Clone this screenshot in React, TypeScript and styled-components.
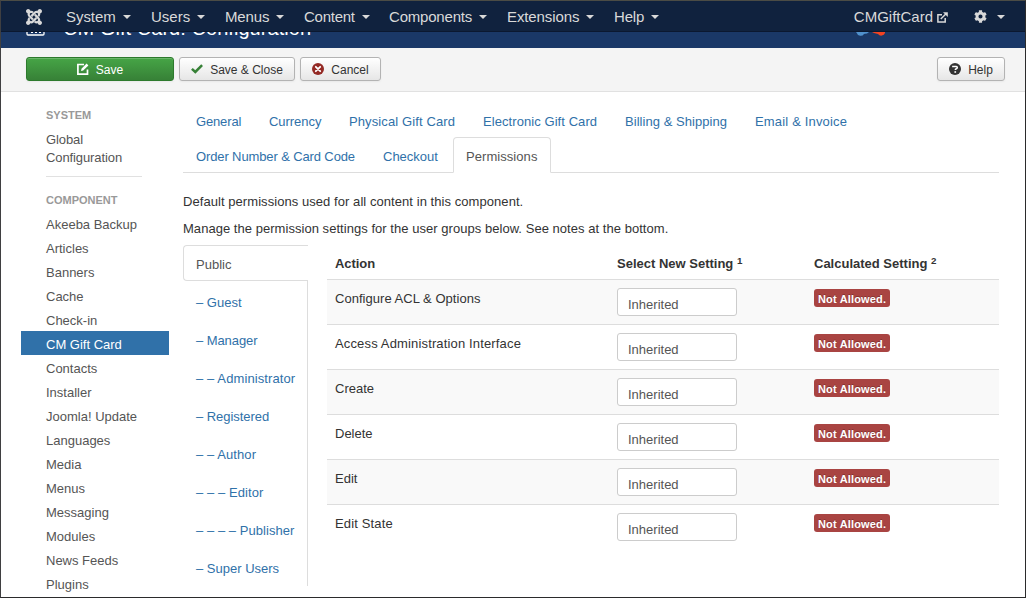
import React from "react";
import styled, { createGlobalStyle } from "styled-components";
import { ImJoomla } from "react-icons/im";
import { FaCog } from "react-icons/fa";

const GlobalStyle = createGlobalStyle`
  *, *::before, *::after { box-sizing: border-box; }
  body { margin: 0; font: 13px/18px "Liberation Sans", Arial, sans-serif; color: #333; background: #fff; }
  ul { list-style: none; margin: 0; padding: 0; }
  p { margin: 0; }
  a { color: inherit; text-decoration: none; }
`;

const Frame = styled.div`
  height: 598px;
  border: 1px solid #2b2b2c;
  border-top-color: #4b4c45;
  border-left-color: #3f3f41;
  overflow: hidden;
  display: flex;
  flex-direction: column;
  background: #fff;
`;

const Navbar = styled.nav`
  flex: none;
  display: flex;
  align-items: center;
  height: 31px;
  padding: 2px 20px 0 25px;
  background: #10223e;
  border-bottom: 1px solid #0b1830;
  color: #d9d9d9;
  font-size: 15px;
`;

const NavMenu = styled.ul`
  display: flex;
  margin-left: 24px;
  flex: 1;
`;

const NavItem = styled.li<{ $w: number; $ls?: number }>`
  display: flex;
  align-items: center;
  width: ${(p) => p.$w}px;
  line-height: 20px;
  white-space: nowrap;
  letter-spacing: ${(p) => p.$ls ?? 0}px;
`;

const Caret = styled.span`
  margin: 0 0 1px 7px;
  border: 4px solid transparent;
  border-top-color: #d9d9d9;
  border-bottom: 0;
`;

const SiteLink = styled.a`
  display: flex;
  align-items: center;
  gap: 4px;
  margin-right: 26px;
`;

const Settings = styled.div`
  display: flex;
  align-items: center;
  gap: 3px;
  svg { margin-bottom: 2px; }
`;

const Header = styled.header`
  flex: none;
  display: flex;
  align-items: flex-start;
  height: 16px;
  padding: 0 139px 0 25px;
  overflow: hidden;
  background: #1a3867;
  color: #fff;
  & > svg { flex: none; }
`;

const Title = styled.h1`
  flex: 1;
  margin: -15px 0 0 18px;
  font-size: 20px;
  line-height: 22px;
  font-weight: normal;
  letter-spacing: 0.05px;
  white-space: nowrap;
`;

const Toolbar = styled.div`
  flex: none;
  display: flex;
  gap: 5px;
  height: 44px;
  padding: 9px 20px 0 25px;
  background: #f4f4f4;
  border-bottom: 1px solid #e1e1e1;
`;

const Button = styled.button<{ $w: number; $primary?: boolean; $end?: boolean }>`
  display: flex;
  align-items: center;
  justify-content: center;
  gap: 7px;
  width: ${(p) => p.$w}px;
  height: 24px;
  margin-left: ${(p) => (p.$end ? "auto" : "0")};
  padding: 1px 0 0;
  font: 12px/18px "Liberation Sans", Arial, sans-serif;
  white-space: nowrap;
  border-radius: 3px;
  border: 1px solid ${(p) => (p.$primary ? "#2d7a2d" : "#b3b3b3")};
  color: ${(p) => (p.$primary ? "#fff" : "#333")};
  background: ${(p) =>
    p.$primary ? "linear-gradient(#46a546, #378137)" : "linear-gradient(#fff, #e6e6e6)"};
  box-shadow: inset 0 1px 0 rgba(255, 255, 255, 0.2), 0 1px 2px rgba(0, 0, 0, 0.05);
  svg { margin-bottom: 1px; }
`;

const Body = styled.div`
  display: flex;
  flex: 1;
  min-height: 0;
`;

const Sidebar = styled.aside`
  flex: none;
  width: 148px;
  margin: 14px 14px 0 20px;
`;

const SideHeading = styled.h2`
  margin: 0;
  padding-left: 25px;
  font-size: 11px;
  line-height: 18px;
  color: #999;
  text-transform: uppercase;
`;

const SideList = styled.ul`
  padding-top: 2px;
`;

const SideItem = styled.li<{ $active?: boolean }>`
  padding: 5px 25px 1px;
  white-space: nowrap;
  color: ${(p) => (p.$active ? "#fff" : "#555")};
  background: ${(p) => (p.$active ? "#3071a9" : "transparent")};
`;

const GlobalItem = styled(SideItem)`
  white-space: normal;
  letter-spacing: -0.1px;
`;

const Divider = styled.hr`
  margin: 8px 27px 14px 25px;
  border: 0;
  border-top: 1px solid #e1e1e1;
`;

const Main = styled.main`
  width: 816px;
`;

const Tabs = styled.ul`
  display: flex;
  flex-wrap: wrap;
  height: 71px;
  margin-top: 10px;
  border-bottom: 1px solid #ddd;
`;

const Tab = styled.li<{ $active?: boolean; $w: number; $ls?: number }>`
  width: ${(p) => p.$w}px;
  height: ${(p) => (p.$active ? 36 : 35)}px;
  margin-right: 2px;
  padding: 10px 0 0 12px;
  border: 1px solid ${(p) => (p.$active ? "#ddd" : "transparent")};
  border-bottom-color: ${(p) => (p.$active ? "#fff" : "transparent")};
  border-radius: 4px 4px 0 0;
  background: ${(p) => (p.$active ? "#fff" : "transparent")};
  color: ${(p) => (p.$active ? "#555" : "#3071a9")};
  letter-spacing: ${(p) => p.$ls ?? 0}px;
  white-space: nowrap;
`;

const Note = styled.p<{ $ls?: number }>`
  margin-bottom: 9px;
  letter-spacing: ${(p) => p.$ls ?? 0}px;
`;

const Notes = styled.div`
  padding-top: 20px;
  height: 72px;
`;

const Permissions = styled.div`
  display: flex;
  gap: 19px;
`;

const Groups = styled.ul`
  flex: none;
  width: 125px;
  height: 341px;
`;

const Group = styled.li<{ $active?: boolean; $ls?: number }>`
  height: ${(p) => (p.$active ? 36 : 38)}px;
  padding: ${(p) => (p.$active ? "10px 0 0 12px" : "13px 0 0 13px")};
  border: 0 solid #ddd;
  border-width: ${(p) => (p.$active ? "1px 0 1px 1px" : "0 1px 0 0")};
  border-radius: ${(p) => (p.$active ? "4px 0 0 4px" : "0")};
  color: ${(p) => (p.$active ? "#555" : "#3071a9")};
  letter-spacing: ${(p) => p.$ls ?? 0}px;
  white-space: nowrap;
  &:last-child { height: 39px; }
`;

const Table = styled.div`
  flex: 1;
`;

const Row = styled.div<{ $odd?: boolean; $head?: boolean }>`
  display: grid;
  grid-template-columns: 282px 197px 193px;
  height: ${(p) => (p.$head ? 34 : 45)}px;
  padding-top: ${(p) => (p.$head ? 9 : 8)}px;
  border-top: ${(p) => (p.$head ? "0" : "1px solid #ddd")};
  background: ${(p) => (p.$odd ? "#f9f9f9" : "#fff")};
  font-weight: ${(p) => (p.$head ? "bold" : "normal")};
`;

const Cell = styled.div<{ $ls?: number }>`
  padding-left: 8px;
  letter-spacing: ${(p) => p.$ls ?? 0}px;
  sup { font-size: 9.75px; line-height: 0; vertical-align: baseline; position: relative; top: -4px; }
`;

const HeadCell = styled(Cell)`
  padding-top: 1px;
`;

const ActionCell = styled(Cell)`
  padding-top: 2px;
`;

const Select = styled.div`
  width: 120px;
  height: 28px;
  padding: 7px 10px 0;
  border: 1px solid #ccc;
  border-radius: 3px;
  background: #fff;
  color: #555;
`;

const Badge = styled.span`
  display: block;
  width: 76px;
  height: 18px;
  margin-top: 1px;
  padding-left: 4px;
  border-radius: 3px;
  background: #a94442;
  color: #fff;
  font-size: 11px;
  font-weight: bold;
  line-height: 20px;
  letter-spacing: 0.17px;
  white-space: nowrap;
  text-shadow: 0 -1px 0 rgba(0, 0, 0, 0.25);
`;

const EditIcon = () => (
  <svg width="12" height="12" viewBox="0 0 12 12" fill="none" stroke="#fff" strokeWidth="1.7">
    <path d="M7 1.5H.9v9.6h9.6V6.5" />
    <path d="M4 8 4.5 5.8 9.6.6 11.4 2.4 6.2 7.5Z" fill="#fff" stroke="none" />
  </svg>
);
const CheckIcon = () => (
  <svg width="12" height="12" viewBox="0 0 12 12" fill="none" stroke="#378137" strokeWidth="2.5">
    <path d="M.9 5.8 4.3 9 11.1 2.2" />
  </svg>
);
const CancelIcon = () => (
  <svg width="12" height="12" viewBox="0 0 12 12">
    <circle cx="6" cy="6" r="6" fill="#942a25" />
    <path d="m3.8 3.8 4.4 4.4m0-4.4L3.8 8.2" stroke="#fff" strokeWidth="1.8" strokeLinecap="round" />
  </svg>
);
const HelpIcon = () => (
  <svg width="12" height="12" viewBox="0 0 12 12">
    <circle cx="6" cy="6" r="6" fill="#333" />
    <path d="M3.9 4.3V3.5h3.4q1 0 1 1 0 .8-1 1.2-1 .4-1 1.4" stroke="#fff" strokeWidth="1.5" fill="none" />
    <path d="M5.4 8.2h1.7v1.6H5.4z" fill="#fff" />
  </svg>
);
const ExternalIcon = () => (
  <svg width="11" height="11" viewBox="0 0 11 11" fill="none" stroke="#d9d9d9" strokeWidth="1.5">
    <path d="M5 2.8H.9v7.3h7.3V6" />
    <path d="M3.8 7 9 1.8" />
    <path d="M6 .2h4.8V5Z" fill="#d9d9d9" stroke="none" />
  </svg>
);
const PanelIcon = () => (
  <svg width="19" height="4" viewBox="0 0 19 4">
    <path d="M1 0v2q0 1 1 1h15q1 0 1-1V0" fill="none" stroke="#fff" strokeWidth="1.3" />
    <path d="M5 0h2v1H5zM9 0h2v1H9zM13 0h2v1h-2z" fill="#fff" />
  </svg>
);
const BrandMark = () => (
  <svg width="30" height="5" viewBox="0 0 30 5">
    <path d="M0 0h13L11 1.5Q8.500 1.500 8 2A4 4 0 0 1 .8 1Z" fill="#5091cd" />
    <path d="M16 0h13v1A4 4 0 0 1 22 2Q20 1.500 18 1Z" fill="#f44321" />
  </svg>
);

const menus: [string, number, number][] = [
  ["System", 85, -0.05],
  ["Users", 74, 0],
  ["Menus", 79, -0.15],
  ["Content", 85, -0.25],
  ["Components", 118, -0.2],
  ["Extensions", 107, -0.1],
  ["Help", 60, -0.2],
];
const components = [
  "Akeeba Backup", "Articles", "Banners", "Cache", "Check-in", "CM Gift Card", "Contacts",
  "Installer", "Joomla! Update", "Languages", "Media", "Menus", "Messaging", "Modules",
  "News Feeds", "Plugins",
];
const tabs: [string, number, number][] = [
  ["General", 71, -0.15],
  ["Currency", 78, -0.05],
  ["Physical Gift Card", 132, 0.11],
  ["Electronic Gift Card", 140, 0.07],
  ["Billing & Shipping", 128, 0.05],
  ["Email & Invoice", 118, 0.17],
  ["Order Number & Card Code", 185, -0.12],
  ["Checkout", 81, 0],
  ["Permissions", 98, 0.06],
];
const groups: [string, number][] = [
  ["Public", 0],
  ["– Guest", 0],
  ["– Manager", -0.08],
  ["– – Administrator", 0.1],
  ["– Registered", -0.05],
  ["– – Author", 0.08],
  ["– – – Editor", 0.08],
  ["– – – – Publisher", 0.05],
  ["– Super Users", 0],
];
const actions: [string, number][] = [
  ["Configure ACL & Options", 0.03],
  ["Access Administration Interface", 0.15],
  ["Create", 0],
  ["Delete", 0],
  ["Edit", 0],
  ["Edit State", 0.15],
];

export default function App() {
  return (
    <Frame>
      <GlobalStyle />
      <Navbar>
        <ImJoomla size={16} />
        <NavMenu>
          {menus.map(([label, w, ls]) => (
            <NavItem key={label} $w={w} $ls={ls}>{label}<Caret /></NavItem>
          ))}
        </NavMenu>
        <SiteLink>CMGiftCard<ExternalIcon /></SiteLink>
        <Settings><FaCog size={13} /><Caret /></Settings>
      </Navbar>
      <Header>
        <PanelIcon />
        <Title>CM Gift Card: Configuration</Title>
        <BrandMark />
      </Header>
      <Toolbar>
        <Button $w={148} $primary><EditIcon />Save</Button>
        <Button $w={116}><CheckIcon />Save &amp; Close</Button>
        <Button $w={81}><CancelIcon />Cancel</Button>
        <Button $w={68} $end><HelpIcon />Help</Button>
      </Toolbar>
      <Body>
        <Sidebar>
          <SideHeading>System</SideHeading>
          <SideList><GlobalItem>Global Configuration</GlobalItem></SideList>
          <Divider />
          <SideHeading>Component</SideHeading>
          <SideList>
            {components.map((c) => (
              <SideItem key={c} $active={c === "CM Gift Card"}>{c}</SideItem>
            ))}
          </SideList>
        </Sidebar>
        <Main>
          <Tabs>
            {tabs.map(([label, w, ls]) => (
              <Tab key={label} $w={w} $ls={ls} $active={label === "Permissions"}>{label}</Tab>
            ))}
          </Tabs>
          <Notes>
            <Note $ls={0.06}>Default permissions used for all content in this component.</Note>
            <Note $ls={0.04}>Manage the permission settings for the user groups below. See notes at the bottom.</Note>
          </Notes>
          <Permissions>
            <Groups>
              {groups.map(([g, ls]) => <Group key={g} $ls={ls} $active={g === "Public"}>{g}</Group>)}
            </Groups>
            <Table>
              <Row $head>
                <HeadCell $ls={-0.05}>Action</HeadCell>
                <HeadCell>Select New Setting <sup>1</sup></HeadCell>
                <HeadCell>Calculated Setting <sup>2</sup></HeadCell>
              </Row>
              {actions.map(([a, ls], i) => (
                <Row key={a} $odd={i % 2 === 0}>
                  <ActionCell $ls={ls}>{a}</ActionCell>
                  <Cell><Select>Inherited</Select></Cell>
                  <Cell><Badge>Not Allowed.</Badge></Cell>
                </Row>
              ))}
            </Table>
          </Permissions>
        </Main>
      </Body>
    </Frame>
  );
}
